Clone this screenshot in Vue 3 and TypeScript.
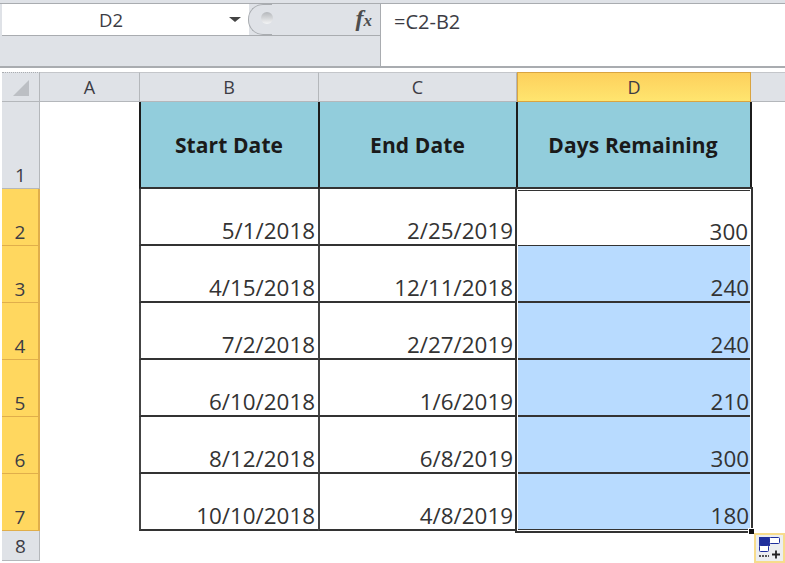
<template>
  <div class="excel">
    <div class="ribbon-edge"></div>
    <div class="formula-area">
      <div class="left-tools">
        <div class="tool-row">
          <div class="name-box">
            <span class="name-text">D2</span>
            <span class="arrow"></span>
          </div>
          <div class="fx-strip">
            <span class="knob"><span class="knob-dot"></span></span>
            <span class="fx">f<small>x</small></span>
          </div>
        </div>
        <div class="tool-blank"></div>
      </div>
      <div class="formula-input">=C2-B2</div>
    </div>
    <div class="gap"></div>

    <div class="sheet">
      <div class="corner"><span class="corner-tri"></span></div>
      <div
        v-for="col in columns"
        :key="col"
        class="col-head"
        :class="{ active: col === 'D' }"
      >{{ col }}</div>
      <div class="col-head rest"></div>

      <div class="row-head first">1</div>
      <div class="cell blank"></div>
      <div class="cell title">Start Date</div>
      <div class="cell title">End Date</div>
      <div class="cell title last-title">Days Remaining</div>
      <div class="cell blank"></div>

      <template v-for="(row, i) in rows" :key="row.start">
        <div class="row-head active">{{ i + 2 }}</div>
        <div class="cell blank"></div>
        <div class="cell data">{{ row.start }}</div>
        <div class="cell data">{{ row.end }}</div>
        <div class="cell data days" :class="i > 0 ? 'picked' : 'current'">{{ row.days }}</div>
        <div class="cell blank"></div>
      </template>

      <div class="row-head last">8</div>
      <div class="after"></div>

      <div class="selection"><div class="fill-handle"></div></div>
      <button class="paste-options" aria-label="Auto fill options">
        <svg width="24" height="24" viewBox="0 0 24 24">
          <rect x="1.500" y="1.500" width="10" height="8" fill="#1f2f9c" stroke="#1f2f9c" />
          <rect x="11.500" y="1.500" width="10" height="6" rx="1" fill="#fff" stroke="#1f2f9c" />
          <rect x="1.500" y="9.500" width="9" height="6" rx="1" fill="#fff" stroke="#1f2f9c" />
          <path d="M1 20h10" stroke="#555" stroke-width="2" stroke-dasharray="2 1" />
          <path d="M14 18.500h8M18 14.500v8" stroke="#222" stroke-width="1.800" />
        </svg>
      </button>
    </div>
  </div>
</template>

<script setup lang="ts">
const columns = ['A', 'B', 'C', 'D']

const rows = [
  { start: '5/1/2018', end: '2/25/2019', days: 300 },
  { start: '4/15/2018', end: '12/11/2018', days: 240 },
  { start: '7/2/2018', end: '2/27/2019', days: 240 },
  { start: '6/10/2018', end: '1/6/2019', days: 210 },
  { start: '8/12/2018', end: '6/8/2019', days: 300 },
  { start: '10/10/2018', end: '4/8/2019', days: 180 },
]
</script>

<style>
html,
body {
  margin: 0;
  background: #fff;
  overflow: hidden;
}
</style>

<style scoped>
.excel {
  width: 785px;
  height: 563px;
  overflow: hidden;
  background: #fff;
  color: #3c3c44;
  font-family: "Open Sans", "Noto Sans", sans-serif;
}

.ribbon-edge {
  height: 4px;
  background: #dfe2e7;
  border-bottom: 1px solid #a9acb0;
  box-sizing: border-box;
}

.formula-area {
  display: flex;
  height: 62px;
  border-bottom: 2px solid #a9acb0;
}

.left-tools {
  width: 381px;
  padding-left: 2px;
  box-sizing: border-box;
  background: #dfe2e7;
  border-right: 1px solid #a9acb0;
  display: flex;
  flex-direction: column;
}

.tool-row {
  display: flex;
  height: 31px;
  border-bottom: 1px solid #a9acb0;
}

.name-box {
  width: 247px;
  background: #fff;
  display: flex;
  align-items: center;
}

.name-text {
  width: 218px;
  text-align: center;
  font-size: 18.500px;
}

.arrow {
  border-left: 6px solid transparent;
  border-right: 6px solid transparent;
  border-top: 5px solid #444;
  margin-left: 9px;
}

.fx-strip {
  flex: 1;
  display: flex;
  align-items: center;
  justify-content: space-between;
  padding-right: 8px;
}

.knob {
  width: 24px;
  height: 31px;
  margin-left: -1px;
  box-sizing: border-box;
  border: 1px solid #a9acb0;
  border-right: none;
  border-radius: 15px 0 0 15px;
  background: #dfe2e7;
  display: flex;
  align-items: flex-start;
  justify-content: flex-end;
  padding-top: 7px;
}

.knob-dot {
  width: 12px;
  height: 12px;
  margin-right: -1px;
  border-radius: 50%;
  background: linear-gradient(#b4b7bb, #f4f5f6);
}

.fx {
  font-family: "Liberation Serif", serif;
  font-style: italic;
  font-weight: 700;
  font-size: 24px;
  line-height: 26px;
  color: #4d4d4d;
}

.fx small {
  font-size: 17px;
}

.tool-blank {
  flex: 1;
}

.formula-input {
  flex: 1;
  padding: 5px 0 0 13px;
  font-size: 20px;
  line-height: 26px;
  background: #fff;
}

.gap {
  height: 4px;
  background: #fff;
}

.sheet {
  display: grid;
  grid-template-columns: 38px 100px 179px 198px 234px 34px;
  grid-template-rows: 30px 87px repeat(6, 57px) 30px;
  margin-left: 2px;
  position: relative;
}

.corner,
.col-head,
.row-head {
  background: #dfe2e7;
  box-sizing: border-box;
  display: flex;
  justify-content: center;
  font-size: 18px;
}

.corner {
  border-right: 1px solid #b4b7bb;
  border-bottom: 1px solid #b4b7bb;
  border-top: 1px dotted #a9acb0;
  align-items: center;
}

.corner-tri {
  width: 0;
  height: 0;
  border-left: 16px solid transparent;
  border-bottom: 16px solid #bcbfc4;
  margin-top: 2px;
}

.col-head {
  align-items: center;
  border-right: 1px solid #b4b7bb;
  border-bottom: 1px solid #b4b7bb;
  border-top: 1px solid #c4c6ca;
}

.col-head.active {
  background: linear-gradient(#fdd05c, #ffe56f);
  border: 1px solid #d9a441;
}

.col-head.rest {
  border-right: none;
}

.row-head {
  align-items: flex-end;
  border-right: 1px solid #b4b7bb;
  border-bottom: 1px solid #b4b7bb;
  font-size: 19px;
  line-height: 24px;
  padding-bottom: 1px;
}

.row-head.active {
  background: #ffd75f;
  border-right: 2px solid #e0ae4b;
  border-bottom: 1px solid #e0ae4b;
}

.row-head.last {
  align-items: center;
  padding-bottom: 0;
}

.cell {
  box-sizing: border-box;
  min-width: 0;
}

.title {
  margin-left: -1px;
  background: #92cddc;
  border-left: 2px solid #1c1c1c;
  border-bottom: 2px solid #333;
  display: flex;
  align-items: center;
  justify-content: center;
  padding-right: 2px;
  font-weight: 700;
  font-size: 21px;
  letter-spacing: 0.1px;
  color: #1a1a1a;
}

.last-title {
  border-right: 2px solid #1c1c1c;
  margin-right: -1px;
}

.data {
  margin-left: -1px;
  display: flex;
  align-items: flex-end;
  justify-content: flex-end;
  padding: 0 4px 0 0;
  font-size: 22.400px;
  line-height: 26px;
  color: #333;
  border-left: 2px solid #444;
  border-bottom: 2px solid #333;
}

.days {
  margin-right: -1px;
  padding-right: 3px;
}

.current {
  border: 1px solid #333;
  margin: 1px 0 0;
  padding-right: 2px;
}

.picked {
  background: #b8dbff;
}

.after {
  grid-column: 2 / -1;
}

.selection {
  position: absolute;
  left: 513px;
  top: 115px;
  width: 238px;
  height: 346px;
  box-sizing: border-box;
  border: 2px solid #333;
  box-shadow: inset 0 0 0 1px #fff;
  pointer-events: none;
}

.fill-handle {
  position: absolute;
  right: -4px;
  bottom: -4px;
  width: 5px;
  height: 5px;
  background: #111;
  border: 1px solid #fff;
}

.paste-options {
  position: absolute;
  left: 752px;
  top: 461px;
  width: 31px;
  height: 30px;
  padding: 0;
  background: #eceef0;
  border: 2px solid #f7dc8c;
  display: flex;
  align-items: center;
  justify-content: center;
}
</style>
